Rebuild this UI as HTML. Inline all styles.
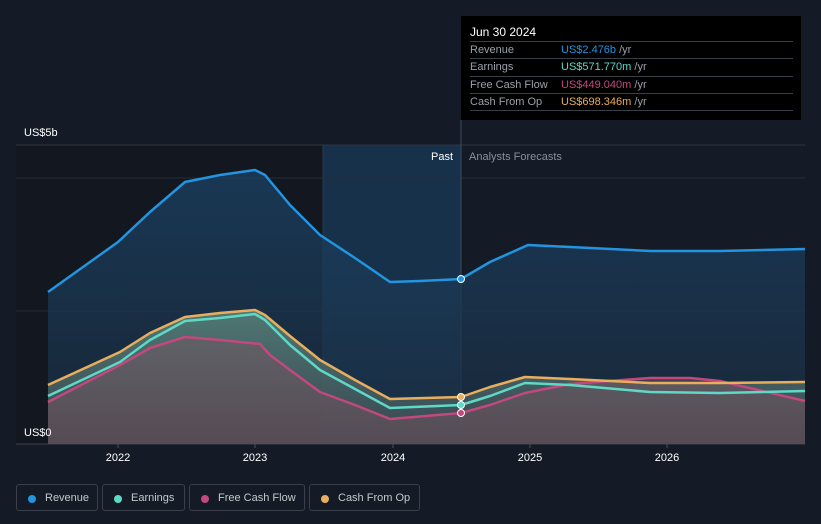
<!DOCTYPE html><html><head><style>
body{margin:0;width:821px;height:524px;background:#151b26;font-family:"Liberation Sans",sans-serif;overflow:hidden;position:relative}
.tt{position:absolute;left:461px;top:16px;width:340px;height:104px;background:#000}
.tt .h{color:#fff;font-size:12px;position:absolute;left:9px;top:9px}
.row{position:absolute;left:9px;width:323px;border-top:1px solid #3a3e45;height:17px;font-size:11px;color:#9aa0a8;line-height:17px}
.row span{position:absolute;left:91px}
.row i{font-style:normal;color:#9aa0a8}
.leg{position:absolute;top:484px;height:27px;border:1px solid #3a3f49;border-radius:3px;color:#c5c8cc;font-size:11px;line-height:27px;box-sizing:border-box}
.leg b{position:absolute;top:10px;left:11px;width:8px;height:8px;border-radius:50%}
.leg span{position:absolute;left:28px}
</style></head><body>
<svg width="821" height="524" style="position:absolute;left:0;top:0">
<defs>
<linearGradient id="rg" x1="0" y1="0" x2="0" y2="1"><stop offset="0" stop-color="#1b4265"/><stop offset="1" stop-color="#1a2b3d"/></linearGradient>
<linearGradient id="eg" x1="0" y1="0" x2="0" y2="1"><stop offset="0" stop-color="#5d8a80"/><stop offset="1" stop-color="#404a52"/></linearGradient>
</defs>
<rect x="16" y="145" width="307" height="299" fill="#131820"/>
<rect x="323" y="145" width="138" height="299" fill="#17314a"/>
<line x1="16" y1="145" x2="805" y2="145" stroke="#2e3540"/>
<line x1="16" y1="178" x2="805" y2="178" stroke="#262d38"/>
<line x1="16" y1="311" x2="805" y2="311" stroke="#262d38"/>
<line x1="16" y1="444" x2="805" y2="444" stroke="#3a404a"/>
<line x1="461" y1="120" x2="461" y2="444" stroke="#3a4a5c"/>
<line x1="323" y1="145" x2="323" y2="444" stroke="#2a3a4c"/>
<polygon fill="url(#rg)" opacity="0.75" points="48,292 118,242 150,212 185,182 220,175 255,170 265,175 290,205 320,235 355,258 390,282 420,281 461,279 490,262 528,245 570,247 650,251 720,251 805,249 805,444 48,444"/>
<polygon fill="url(#eg)" opacity="0.8" points="48,385 120,352 150,333 185,317 220,313 255,310 265,315 290,336 320,360 355,380 390,399 461,397 490,387 525,377 570,379 650,383 720,383 805,382 805,444 48,444"/>
<polygon fill="#7a5560" opacity="0.45" points="48,402 120,365 150,348 185,337 220,340 260,344 270,355 290,370 320,392 355,405 390,419 461,413 490,405 525,393 570,384 650,378 690,378 720,381 805,401 805,444 48,444"/>
<g fill="none" stroke-width="2.5" stroke-linejoin="round">
<polyline stroke="#2394df" points="48,292 118,242 150,212 185,182 220,175 255,170 265,175 290,205 320,235 355,258 390,282 420,281 461,279 490,262 528,245 570,247 650,251 720,251 805,249"/>
<polyline stroke="#c2487d" points="48,402 120,365 150,348 185,337 220,340 260,344 270,355 290,370 320,392 355,405 390,419 461,413 490,405 525,393 570,384 650,378 690,378 720,381 805,401"/>
<polyline stroke="#e8ae5e" points="48,385 120,352 150,333 185,317 220,313 255,310 265,315 290,336 320,360 355,380 390,399 461,397 490,387 525,377 570,379 650,383 720,383 805,382"/>
<polyline stroke="#5fd8c6" points="48,396 120,362 150,340 185,321 220,318 255,314 265,320 290,345 320,370 355,389 390,408 461,405 490,396 525,383 570,385 650,392 720,393 805,391"/>
</g>
<circle cx="461" cy="279" r="3.5" fill="#2394df" stroke="#fff"/>
<circle cx="461" cy="397" r="3.5" fill="#e8ae5e" stroke="#fff"/>
<circle cx="461" cy="405" r="3.5" fill="#5fd8c6" stroke="#fff"/>
<circle cx="461" cy="413" r="3.5" fill="#c2487d" stroke="#fff"/>
<g stroke="#4a505a"><line x1="118" y1="444" x2="118" y2="448"/><line x1="255" y1="444" x2="255" y2="448"/><line x1="393" y1="444" x2="393" y2="448"/><line x1="530" y1="444" x2="530" y2="448"/><line x1="667" y1="444" x2="667" y2="448"/></g>
<g font-size="11" fill="#fff" text-anchor="middle"><text x="118" y="461">2022</text><text x="255" y="461">2023</text><text x="393" y="461">2024</text><text x="530" y="461">2025</text><text x="667" y="461">2026</text></g>
<text x="24" y="136" font-size="11" fill="#fff">US$5b</text>
<text x="24" y="436" font-size="11" fill="#fff">US$0</text>
<text x="453" y="160" font-size="11" fill="#fff" text-anchor="end">Past</text>
<text x="469" y="160" font-size="11" fill="#8a9099">Analysts Forecasts</text>
</svg>
<div class="tt"><div class="h">Jun 30 2024</div>
<div class="row" style="top:25px">Revenue<span style="color:#2394df">US$2.476b <i>/yr</i></span></div>
<div class="row" style="top:42px">Earnings<span style="color:#5fd8c6">US$571.770m <i>/yr</i></span></div>
<div class="row" style="top:60px">Free Cash Flow<span style="color:#c2487d">US$449.040m <i>/yr</i></span></div>
<div class="row" style="top:77px">Cash From Op<span style="color:#e8ae5e">US$698.346m <i>/yr</i></span></div>
<div class="row" style="top:94px"></div>
</div>
<div class="leg" style="left:16px;width:82px"><b style="background:#2394df"></b><span>Revenue</span></div>
<div class="leg" style="left:102px;width:83px"><b style="background:#5fd8c6"></b><span>Earnings</span></div>
<div class="leg" style="left:189px;width:116px"><b style="background:#c2487d"></b><span>Free Cash Flow</span></div>
<div class="leg" style="left:309px;width:111px"><b style="background:#e8ae5e"></b><span>Cash From Op</span></div>
</body></html>
